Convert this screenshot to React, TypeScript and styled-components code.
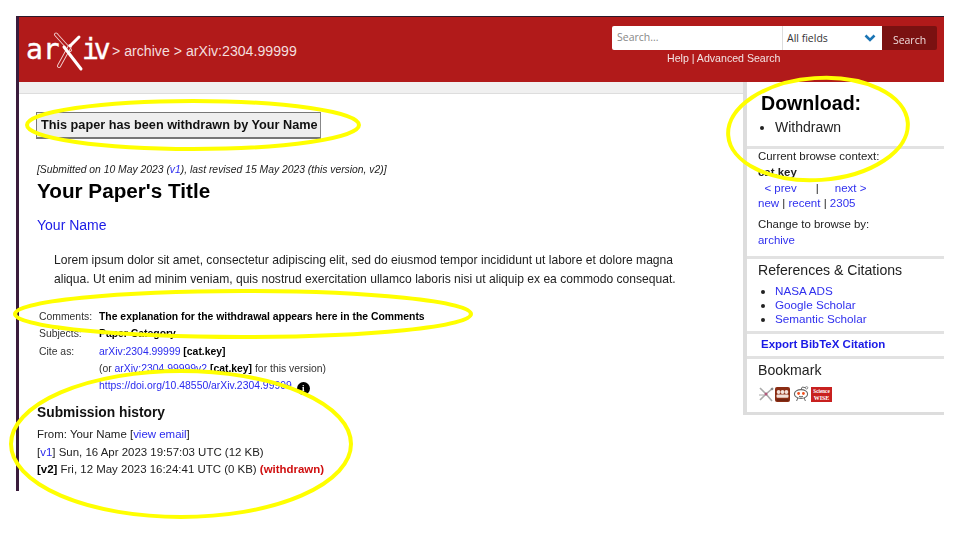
import React from "react";
import styled, { createGlobalStyle } from "styled-components";

const Global = createGlobalStyle`
  html, body { margin: 0; padding: 0; background: #fff; overflow: hidden; }
  body { font-family: "Liberation Sans", Arial, sans-serif; color: #111; }
  a { color: #2a2aee; text-decoration: none; }
`;

const Canvas = styled.div`
  position: relative;
  width: 960px;
  height: 540px;
  padding: 16px 0 0 16px;
  box-sizing: border-box;
  filter: blur(0.35px);
`;
const Frame = styled.div`
  width: 928px;
  height: 475px;
  box-sizing: border-box;
  border-top: 1px solid #2b1a2b;
  border-left: 3px solid #3a1c3c;
  display: flex;
  flex-direction: column;
`;
const Header = styled.header`
  height: 65px;
  flex: none;
  background: #b11a1a;
  display: flex;
  justify-content: space-between;
  color: #fff;
`;
const Brand = styled.div`
  display: flex;
  align-items: center;
  padding: 0 0 0 8px;
  height: 68px;
`;
const Crumbs = styled.span`
  font-size: 14.15px;
  margin-left: 3px;
  color: #f3dede;
`;
const SearchArea = styled.div`
  width: 325px;
  margin-right: 7px;
  padding-top: 9px;
  display: flex;
  flex-direction: column;
`;
const SearchRow = styled.div`
  display: flex;
  height: 24px;
  font-family: "Open Sans", sans-serif;
  font-size: 10.5px;
`;
const SearchInput = styled.div`
  width: 170px;
  box-sizing: border-box;
  background: #fff;
  color: #888;
  padding-left: 5px;
  line-height: 23px;
  border-radius: 2px 0 0 2px;
`;
const FieldSelect = styled.div`
  width: 100px;
  box-sizing: border-box;
  background: #fff;
  color: #333;
  border-left: 1px solid #ddd;
  padding: 0 6px 0 4px;
  line-height: 23px;
  display: flex;
  align-items: center;
  justify-content: space-between;
`;
const SearchButton = styled.div`
  width: 55px;
  background: #7a1111;
  color: #eedcdc;
  text-align: center;
  line-height: 29px;
  border-radius: 0 2px 2px 0;
`;
const SearchLinks = styled.div`
  font-size: 10.6px;
  line-height: 16px;
  padding: 0 0 0 55px;
  color: #f3e4e4;
`;
const Main = styled.div`
  flex: 1;
  display: flex;
  align-items: flex-start;
`;
const Content = styled.main`
  width: 724px;
  flex: none;
`;
const Strip = styled.div`
  height: 11px;
  background: #f0f0f0;
  border-bottom: 1px solid #ddd;
`;
const Article = styled.article`
  padding: 18px 0 0 17px;
`;
const Withdrawn = styled.div`
  width: 285px;
  height: 27px;
  box-sizing: border-box;
  background: #eee;
  border: 1px solid #777;
  border-right-color: #888;
  border-bottom-width: 2px;
  font-weight: bold;
  font-size: 12.7px;
  line-height: 24px;
  padding-left: 4px;
  color: #111;
`;
const Dateline = styled.div`
  margin: 24px 0 0 1px;
  font-size: 10.35px;
  line-height: 14px;
  font-style: italic;
  color: #222;
`;
const Title = styled.h1`
  margin: 0 0 0 1px;
  font-size: 20.7px;
  line-height: 27px;
  font-weight: bold;
  color: #000;
`;
const Authors = styled.div`
  margin: 11px 0 0 1px;
  font-size: 14px;
  line-height: 20px;
  a { color: #1a1ae6; }
`;
const Abstract = styled.p`
  margin: 16px 0 0 18px;
  width: 640px;
  font-size: 12.08px;
  line-height: 19px;
  color: #222;
`;
const Meta = styled.div`
  margin: 19px 0 0 3px;
  display: grid;
  grid-template-columns: 60px 1fr;
  grid-auto-rows: 17.3px;
  font-size: 10.4px;
  line-height: 17.3px;
  color: #333;
  b { color: #000; }
`;
const MetaValue = styled.div`
  white-space: pre;
`;
const InfoDot = styled.span`
  display: inline-block;
  width: 13px;
  height: 13px;
  border-radius: 50%;
  background: #000;
  color: #fff;
  font: bold 9px/13px "Liberation Serif", serif;
  text-align: center;
  margin-left: 5px;
  vertical-align: -2px;
`;
const HistoryHeading = styled.h2`
  margin: 9px 0 3px 1px;
  font-size: 13.8px;
  line-height: 20px;
  font-weight: bold;
  color: #111;
`;
const HistoryRow = styled.div`
  margin-left: 1px;
  font-size: 11.46px;
  line-height: 17.3px;
  color: #222;
  b { color: #000; }
`;
const Red = styled.b`
  && { color: #d01010; }
`;
const Side = styled.aside`
  flex: none;
  width: 201px;
  box-sizing: border-box;
  border-left: 4px solid #ddd;
  border-bottom: 3px solid #ddd;
  height: 333px;
  font-size: 11px;
  color: #222;
`;
const SideBlock = styled.section<{ $h: number }>`
  height: ${(p) => p.$h}px;
  box-sizing: border-box;
  border-bottom: 3px solid #e2e2e2;
  padding: 0 0 0 11px;
  &:last-child { border-bottom: 0; }
`;
const DownloadTitle = styled.h2`
  margin: 0 0 0 3px;
  padding-top: 9px;
  font-size: 19.6px;
  line-height: 24px;
  color: #000;
`;
const DownloadList = styled.ul`
  margin: 2px 0 0;
  padding: 0 0 0 17px;
  font-size: 14px;
  line-height: 20px;
  color: #222;
`;
const SideLine = styled.div<{ $mt?: number }>`
  font-size: 11.45px;
  line-height: 15.5px;
  margin-top: ${(p) => p.$mt ?? 0}px;
  color: #222;
  white-space: pre;
  a { color: #3030ee; }
`;
const NavLine = styled(SideLine)`
  font-size: 11.5px;
  line-height: 15px;
`;
const SideHeading = styled.h3`
  margin: 0;
  padding-top: 2px;
  font-size: 14.1px;
  line-height: 19px;
  font-weight: normal;
  color: #222;
`;
const SideList = styled.ul`
  margin: 4px 0 0;
  padding: 0 0 0 17px;
  font-size: 11.7px;
  line-height: 14px;
  a { color: #3030ee; }
`;
const ExportLink = styled.a`
  display: block;
  margin-left: 3px;
  font-size: 11.5px;
  font-weight: bold;
  line-height: 21px;
  && { color: #1a1ae6; }
`;
const IconRow = styled.div`
  display: flex;
  margin-top: 6px;
  align-items: center;
`;
const IconSlot = styled.span<{ $w: number }>`
  display: flex;
  width: ${(p) => p.$w}px;
`;
const Overlay = styled.svg`
  position: absolute;
  left: 0;
  top: 0;
  pointer-events: none;
`;
const LogoText = styled.text<{ $track?: number }>`
  font-family: "DejaVu Sans Mono", monospace;
  font-size: 28px;
  letter-spacing: ${(p) => p.$track ?? 0}px;
  fill: #fff;
  stroke: #fff;
  stroke-width: 0.4px;
`;
const WiseLabel = styled.text`
  font-family: "Liberation Serif", serif;
  font-weight: bold;
  fill: #fff;
`;

const Capsule = ({ d }: { d: string }) => (
  <>
    <path d={d} stroke="#f3d2d2" strokeWidth="4" strokeLinecap="round" fill="none" />
    <path d={d} stroke="#b11a1a" strokeWidth="2.2" strokeLinecap="round" fill="none" />
  </>
);

const Logo = () => (
  <svg width="82" height="37" viewBox="0 0 82 37" style={{ overflow: "visible" }}>
    <LogoText x="-1" y="26">ar</LogoText>
    <LogoText x="55" y="26" $track={-5}>iv</LogoText>
    <Capsule d="M29 1.5 L43 17" />
    <Capsule d="M43 13 L32 33" />
    <path d="M37 14 L54 36" stroke="#fff" strokeWidth="3" strokeLinecap="round" />
    <path d="M52 4 L43 13" stroke="#fff" strokeWidth="3" strokeLinecap="round" />
  </svg>
);

const ChevronIcon = () => (
  <svg width="12" height="8" viewBox="0 0 12 8">
    <path d="M1.5 1.5 L6 6 L10.5 1.5" fill="none" stroke="#1b75b5" strokeWidth="2.6" />
  </svg>
);
const ConnoteaIcon = () => (
  <svg width="16" height="16" viewBox="0 0 16 16">
    <path d="M2 2 L8 8 L14 15 M15 2 L8 8 L2 14" stroke="#aaa" strokeWidth="1.6" fill="none" />
    <path d="M1 9 L6 9" stroke="#aaa" strokeWidth="1" />
    <circle cx="8" cy="8" r="1.5" fill="#b0587a" />
    <circle cx="14" cy="3" r="1.3" fill="#888" />
  </svg>
);
const BibsonomyIcon = () => (
  <svg width="15" height="15" viewBox="0 0 15 15">
    <rect width="15" height="15" rx="2" fill="#8b2d14" />
    <circle cx="3.6" cy="5" r="1.9" fill="#f3e0d8" />
    <circle cx="7.5" cy="5" r="1.9" fill="#f3e0d8" />
    <circle cx="11.4" cy="5" r="1.9" fill="#f3e0d8" />
    <rect x="1.5" y="7.5" width="12" height="3.2" rx="1" fill="#f3e0d8" />
    <rect x="1.5" y="12.5" width="12" height="1" fill="#5e1d0c" />
  </svg>
);
const RedditIcon = () => (
  <svg width="16" height="16" viewBox="0 0 16 16">
    <ellipse cx="8" cy="8" rx="6.6" ry="4.4" fill="#fff" stroke="#666" strokeWidth="1.1" />
    <circle cx="5.6" cy="7.5" r="1.4" fill="#f0501e" />
    <circle cx="10.4" cy="7.5" r="1.4" fill="#f0501e" />
    <path d="M8 3.6 L9.3 1 L13 1.8 M4.8 12 L3.6 15 M11.2 12 L12.4 15 M6 10.3 Q8 11.3 10 10.3" stroke="#666" fill="none" strokeWidth="1" />
    <circle cx="13.6" cy="1.8" r="1.2" fill="#fff" stroke="#666" strokeWidth="0.7" />
  </svg>
);
const WiseIcon = () => (
  <svg width="21" height="15" viewBox="0 0 21 15">
    <rect width="21" height="15" fill="#c8201f" />
    <WiseLabel x="10.5" y="6" fontSize="5.2" textAnchor="middle">Science</WiseLabel>
    <WiseLabel x="10.5" y="12.5" fontSize="6" textAnchor="middle">WISE</WiseLabel>
  </svg>
);

export default function App() {
  return (
    <>
      <Global />
      <Canvas>
        <Frame>
          <Header>
            <Brand>
              <Logo />
              <Crumbs>&gt; archive &gt; arXiv:2304.99999</Crumbs>
            </Brand>
            <SearchArea>
              <SearchRow>
                <SearchInput>Search...</SearchInput>
                <FieldSelect>All fields<ChevronIcon /></FieldSelect>
                <SearchButton>Search</SearchButton>
              </SearchRow>
              <SearchLinks>Help | Advanced Search</SearchLinks>
            </SearchArea>
          </Header>
          <Main>
            <Content>
              <Strip />
              <Article>
                <Withdrawn>This paper has been withdrawn by Your Name</Withdrawn>
                <Dateline>[Submitted on 10 May 2023 (<a href="#">v1</a>), last revised 15 May 2023 (this version, v2)]</Dateline>
                <Title>Your Paper's Title</Title>
                <Authors><a href="#">Your Name</a></Authors>
                <Abstract>
                  Lorem ipsum dolor sit amet, consectetur adipiscing elit, sed do eiusmod tempor incididunt ut labore et dolore magna aliqua. Ut enim ad minim veniam, quis nostrud exercitation ullamco laboris nisi ut aliquip ex ea commodo consequat.
                </Abstract>
                <Meta>
                  <div>Comments:</div>
                  <MetaValue><b>The explanation for the withdrawal appears here in the Comments</b></MetaValue>
                  <div>Subjects:</div>
                  <MetaValue><b>Paper Category</b></MetaValue>
                  <div>Cite as:</div>
                  <MetaValue><a href="#">arXiv:2304.99999</a> <b>[cat.key]</b></MetaValue>
                  <div />
                  <MetaValue>(or <a href="#">arXiv:2304.99999v2</a> <b>[cat.key]</b> for this version)</MetaValue>
                  <div />
                  <MetaValue><a href="#">https://doi.org/10.48550/arXiv.2304.99999</a><InfoDot>i</InfoDot></MetaValue>
                </Meta>
                <HistoryHeading>Submission history</HistoryHeading>
                <HistoryRow>From: Your Name [<a href="#">view email</a>]</HistoryRow>
                <HistoryRow>[<a href="#">v1</a>] Sun, 16 Apr 2023 19:57:03 UTC (12 KB)</HistoryRow>
                <HistoryRow><b>[v2]</b> Fri, 12 May 2023 16:24:41 UTC (0 KB) <Red>(withdrawn)</Red></HistoryRow>
              </Article>
            </Content>
            <Side>
              <SideBlock $h={67}>
                <DownloadTitle>Download:</DownloadTitle>
                <DownloadList><li>Withdrawn</li></DownloadList>
              </SideBlock>
              <SideBlock $h={110}>
                <SideLine>Current browse context:</SideLine>
                <SideLine><b>cat.key</b></SideLine>
                <NavLine $mt={1}><a href="#">  &lt; prev</a>      |     <a href="#">next &gt;</a></NavLine>
                <NavLine>
                  <a href="#">new</a> | <a href="#">recent</a> | <a href="#">2305</a>
                </NavLine>
                <SideLine $mt={6}>Change to browse by:</SideLine>
                <SideLine><a href="#">archive</a></SideLine>
              </SideBlock>
              <SideBlock $h={75}>
                <SideHeading>References &amp; Citations</SideHeading>
                <SideList>
                  <li><a href="#">NASA ADS</a></li>
                  <li><a href="#">Google Scholar</a></li>
                  <li><a href="#">Semantic Scholar</a></li>
                </SideList>
              </SideBlock>
              <SideBlock $h={25}>
                <ExportLink href="#">Export BibTeX Citation</ExportLink>
              </SideBlock>
              <SideBlock $h={53}>
                <SideHeading>Bookmark</SideHeading>
                <IconRow>
                  <IconSlot $w={17}><ConnoteaIcon /></IconSlot>
                  <IconSlot $w={18}><BibsonomyIcon /></IconSlot>
                  <IconSlot $w={18}><RedditIcon /></IconSlot>
                  <IconSlot $w={21}><WiseIcon /></IconSlot>
                </IconRow>
              </SideBlock>
            </Side>
          </Main>
        </Frame>
        <Overlay width="960" height="540" viewBox="0 0 960 540">
          <g fill="none" stroke="#ffff00" strokeWidth="4">
            <ellipse cx="193" cy="125" rx="166" ry="24" />
            <ellipse cx="818" cy="129" rx="90" ry="51" transform="rotate(-4 818 129)" />
            <ellipse cx="243" cy="314" rx="228" ry="23" />
            <ellipse cx="181" cy="444" rx="170" ry="73" />
          </g>
        </Overlay>
      </Canvas>
    </>
  );
}
